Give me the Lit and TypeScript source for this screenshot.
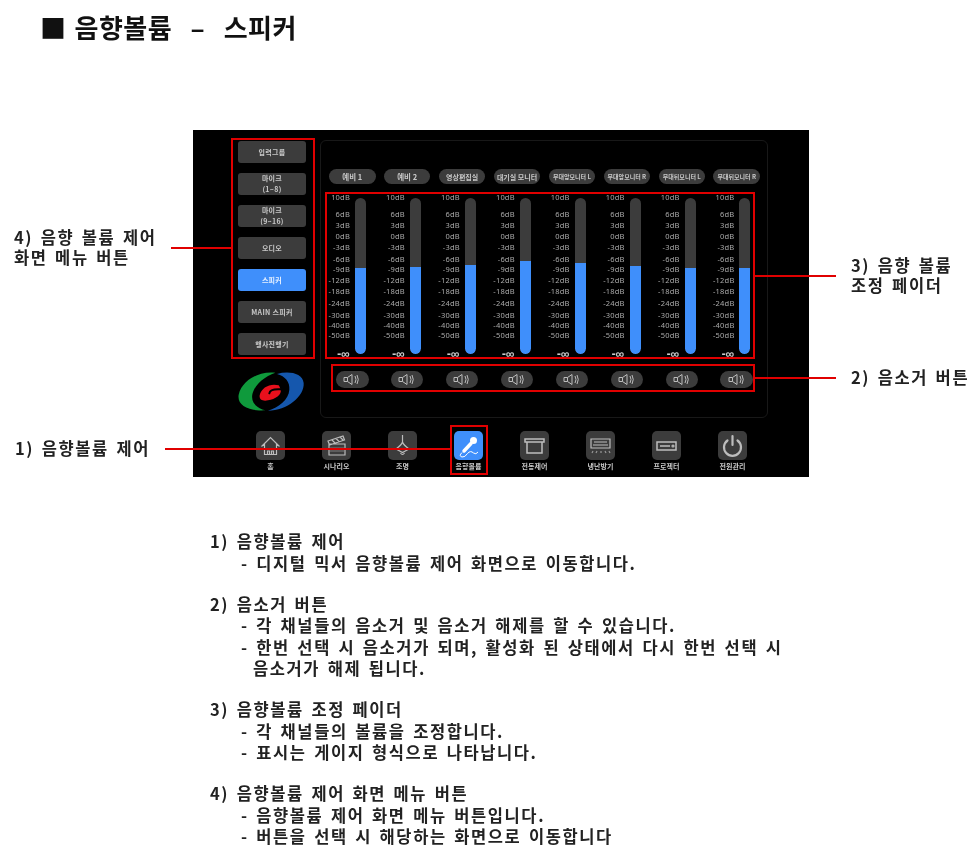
import { LitElement, html, css, svg } from "lit";
import { customElement } from "lit/decorators.js";

const MENU = ["입력그룹", "마이크\n(1~8)", "마이크\n(9~16)", "오디오", "스피커", "MAIN 스피커", "행사진행기"];
const CHANNELS = [
  { name: "예비 1", top: 70, size: 7.5 },
  { name: "예비 2", top: 68.5, size: 7.5 },
  { name: "영상편집실", top: 67, size: 7 },
  { name: "대기실 모니터", top: 63, size: 7 },
  { name: "무대앞모니터 L", top: 64.5, size: 6 },
  { name: "무대앞모니터 R", top: 68, size: 6 },
  { name: "무대뒤모니터 L", top: 70, size: 6 },
  { name: "무대뒤모니터 R", top: 70, size: 6 },
];
const SCALE: [string, number][] = [
  ["10dB", 197], ["6dB", 213.6], ["3dB", 225], ["0dB", 236], ["-3dB", 247], ["-6dB", 259], ["-9dB", 269.5],
  ["-12dB", 279.8], ["-18dB", 291], ["-24dB", 303], ["-30dB", 314.6], ["-40dB", 324.8], ["-50dB", 335], ["-∞", 354],
];
const ICONS = {
  home: svg`<path d="M5.500 15.500 14.500 6.500 23.500 15.500M8.500 13v10.500h12V13M11.500 23.500v-3.500h2v3.500M15.500 23.500v-3.500h2v3.500"/>`,
  clap: svg`<path d="M7 13h16v11H7zM6 10l15-5 1.500 4-15 5zM10 9l3 3M14 7.500l3 3M18 6l3 3"/><path d="M8 17h14M8 20h14" stroke-opacity=".5"/>`,
  light: svg`<path d="M14.500 4v7M14.500 11q-1 3-6.500 7l6.500 3.500L21 18q-5.500-4-6.500-7zM12.500 22q2 3 4 0"/>`,
  mic: svg`<path d="M10 20 17 12.500" stroke="#fff" stroke-width="3.500" stroke-linecap="round"/><circle cx="19.500" cy="9.500" r="3.500" fill="#fff" stroke="none"/><path d="M8 21.500Q4.500 25 8 26q3 .500 5.500-3.500 3-3.500 6-.500 2.500 2 4.500-1" stroke="#fff" stroke-width="1"/>`,
  shutter: svg`<path d="M5 8h19v3H5zM7 11v11h15V11" stroke-width="1.500"/>`,
  ac: svg`<path d="M5 8h19v9H5zM7 14h15M8 11h13"/><path d="M7 20l-1 2M11 20l-1 2M15 20v2M19 20l1 2M23 20l1 2" stroke-opacity=".7"/>`,
  proj: svg`<path d="M5 11h19v8H5zM8 15h10" stroke-width="1.500"/><circle cx="21" cy="15" r="1"/>`,
  power: svg`<path d="M9.500 9.500a8.500 8.500 0 1 0 10 0M14.500 5v9" stroke-width="2.200" stroke-linecap="round"/>`,
};
const NAV: [string, keyof typeof ICONS, boolean][] = [
  ["홈", "home", false], ["시나리오", "clap", false], ["조명", "light", false], ["음향볼륨", "mic", true],
  ["전동제어", "shutter", false], ["냉난방기", "ac", false], ["프로젝터", "proj", false], ["전원관리", "power", false],
];
const DOCS: [string, string[][]][] = [
  ["1) 음향볼륨 제어", [["디지털 믹서 음향볼륨 제어 화면으로 이동합니다."]]],
  ["2) 음소거 버튼", [["각 채널들의 음소거 및 음소거 해제를 할 수 있습니다."], ["한번 선택 시 음소거가 되며, 활성화 된 상태에서 다시 한번 선택 시", "음소거가 해제 됩니다."]]],
  ["3) 음향볼륨 조정 페이더", [["각 채널들의 볼륨을 조정합니다."], ["표시는 게이지 형식으로 나타납니다."]]],
  ["4) 음향볼륨 제어 화면 메뉴 버튼", [["음향볼륨 제어 화면 메뉴 버튼입니다."], ["버튼을 선택 시 해당하는 화면으로 이동합니다"]]],
];
// callout geometry on the free canvas of the page: x, y, w, h
const BOXES = [[231, 138, 84, 221], [325, 192, 430, 167], [331, 364, 424, 28], [450, 425, 38, 50]];
const LINES = [[171, 247, 60], [755, 275, 81], [755, 377, 81], [165, 448, 285]];
const NOTES: [number, number, string[]][] = [
  [14, 227, ["4) 음향 볼륨 제어", "화면 메뉴 버튼"]], [851, 255, ["3) 음향 볼륨", "조정 페이더"]],
  [851, 367, ["2) 음소거 버튼"]], [15, 438, ["1) 음향볼륨 제어"]],
];

@customElement("app-root")
export class AppRoot extends LitElement {
  static styles = css`
    :host { display: block; position: relative; width: 974px; height: 859px; overflow: hidden; background: #fff; color: #111;
      font-family: "Noto Sans CJK KR", "Noto Sans", sans-serif; }
    .title { margin: 0; padding: 8px 0 0 40px; height: 130px; box-sizing: border-box; display: flex; align-items: flex-start; gap: 8px; font-size: 26px; line-height: 38px; font-weight: 700; letter-spacing: .5px; word-spacing: 12px; filter: blur(.35px); }
    .screen { margin-left: 193px; width: 616px; height: 347px; background: #000; display: grid; grid-template-columns: 127px 448px; grid-template-rows: 288px 1fr; filter: blur(.6px); color: #c8c8c8; }
    .side { padding: 11px 0 0 45px; display: flex; flex-direction: column; gap: 10px; }
    .menu { width: 68px; height: 22px; border-radius: 3px; background: #3c3c3c; display: flex; align-items: center; justify-content: center; text-align: center; white-space: pre-line; font-size: 7px; line-height: 11px; font-weight: 700; letter-spacing: .3px; }
    .menu.on { background: #3f8ffb; color: #e8f2ff; }
    .logo { display: block; margin: 3px 0 0 -6px; }
    .panel { margin-top: 10px; height: 278px; box-sizing: border-box; border: 1px solid #181818; border-radius: 6px; padding: 28px 0 0 8px; }
    .row { display: grid; width: 431px; grid-template-columns: repeat(8, 1fr); column-gap: 8.4px; }
    .pill { height: 15px; border-radius: 8px; background: #3c3c3c; display: flex; align-items: center; justify-content: center; white-space: nowrap; font-weight: 700; }
    .faders { margin-top: 9px; height: 161px; }
    .fader { display: flex; gap: 5px; }
    .scale { width: 21px; flex: none; display: flex; flex-direction: column; align-items: flex-end; }
    .scale span { display: block; line-height: 8px; font-size: 7.500px; letter-spacing: .2px; white-space: nowrap; font-family: "Noto Sans", sans-serif; color: #aaa; }
    .scale span.inf { font-size: 12px; font-weight: 700; color: #ccc; }
    .bar { margin-top: 5px; width: 11px; height: 156px; border-radius: 5.500px; background: #3c3c3c; overflow: hidden; display: flex; flex-direction: column; justify-content: flex-end; }
    .fill { background: #3f8ffb; border-radius: 0 0 5.500px 5.500px; }
    .mutes { margin-top: 17px; }
    .mute { justify-self: center; width: 32.500px; height: 17px; border-radius: 9px; background: #3c3c3c; display: flex; align-items: center; justify-content: center; }
    .mute svg { display: block; fill: none; stroke: #bdbdbd; stroke-width: 1; }
    .nav { grid-column: 1 / 3; display: flex; padding: 13px 0 0 44.500px; }
    .item { width: 66px; display: flex; flex-direction: column; align-items: center; gap: 1px; font-size: 7px; line-height: 10px; font-weight: 700; white-space: nowrap; }
    .tile { width: 29px; height: 29px; border-radius: 5px; background: #3c3c3c; }
    .tile svg { display: block; fill: none; stroke: #bdbdbd; stroke-width: 1.200; }
    .item.on .tile { background: #3f8ffb; }
    .docs { margin: 54px 0 0 210px; display: flex; flex-direction: column; gap: 19.500px; font-size: 16.500px; line-height: 21.500px; font-weight: 700; letter-spacing: 1.600px; word-spacing: 2.200px; color: #222; filter: blur(.45px); }
    .doc p { margin: 0; white-space: pre; }
    .doc p.sub { padding-left: 31px; }
    .doc p.cont { padding-left: 43px; }
    .box { position: absolute; box-sizing: border-box; border: 2px solid #e00000; }
    .line { position: absolute; height: 2px; background: #e00000; }
    .note { position: absolute; font-size: 16.500px; line-height: 20px; font-weight: 700; letter-spacing: 1.600px; word-spacing: 2.200px; color: #222; filter: blur(.45px); white-space: nowrap; }
  `;

  private speaker() {
    return html`<svg width="24" height="13" viewBox="0 0 24 13">
      <path d="M4 4.500h3.500L12 1.500v10L7.500 8.500H4zM7.500 4.500v4"/>
      <path d="M15 3q2 3.500 0 7M17 2q2.500 4.500 0 9"/>
    </svg>`;
  }

  render() {
    return html`
      <h1 class="title"><span>■</span><span>음향볼륨 – 스피커</span></h1>
      <section class="screen">
        <div class="side">
          ${MENU.map((m, i) => html`<div class="menu ${i === 4 ? "on" : ""}">${m}</div>`)}
          <svg class="logo" width="76" height="48" viewBox="0 0 228 144">
            <path fill="#0f9a3c" d="M130 14C85 8 30 35 20 80c-5 30 25 50 80 47-30-9-45-27-38-52C72 45 100 25 130 14z"/>
            <path fill="#1557ad" d="M135 18c35-10 77-3 80 27 3 40-50 83-107 83 32-10 62-33 64-63 2-23-12-40-37-47z"/>
            <path fill="#e8101c" d="M140 52C115 45 88 58 83 82c-2 15 12 18 25 15 22-4 42-17 38-32-2-6-4-10-6-13z"/>
            <path fill="none" stroke="#000" stroke-width="6" stroke-linecap="round" d="M112 76q2-14 34-12"/>
          </svg>
        </div>
        <div class="panel">
          <div class="row">
            ${CHANNELS.map((c) => html`<div class="pill" style="font-size:${c.size}px">${c.name}</div>`)}
          </div>
          <div class="row faders">
            ${CHANNELS.map((c) => html`<div class="fader">
              <div class="scale">
                ${SCALE.map(([t, y], i) => {
                  const next = SCALE[i + 1]?.[1] ?? y + 8;
                  return html`<span class=${t === "-∞" ? "inf" : ""} style="height:${next - y}px">${t}</span>`;
                })}
              </div>
              <div class="bar"><div class="fill" style="height:${156 - c.top}px"></div></div>
            </div>`)}
          </div>
          <div class="row mutes">
            ${CHANNELS.map(() => html`<div class="mute">${this.speaker()}</div>`)}
          </div>
        </div>
        <nav class="nav">
          ${NAV.map(([label, icon, on]) => html`<div class="item ${on ? "on" : ""}">
            <div class="tile"><svg width="29" height="29" viewBox="0 0 29 29">${ICONS[icon]}</svg></div>
            <span>${label}</span>
          </div>`)}
        </nav>
      </section>
      <section class="docs">
        ${DOCS.map(([h, items]) => html`<div class="doc">
          <p>${h}</p>
          ${items.map(([first, ...rest]) => html`<p class="sub">- ${first}</p>${rest.map((t) => html`<p class="cont">${t}</p>`)}`)}
        </div>`)}
      </section>
      ${BOXES.map(([x, y, w, h]) => html`<div class="box" style="left:${x}px;top:${y}px;width:${w}px;height:${h}px"></div>`)}
      ${LINES.map(([x, y, w]) => html`<div class="line" style="left:${x}px;top:${y}px;width:${w}px"></div>`)}
      ${NOTES.map(([x, y, lines]) => html`<div class="note" style="left:${x}px;top:${y}px">${lines.map((t) => html`<div>${t}</div>`)}</div>`)}
    `;
  }
}
